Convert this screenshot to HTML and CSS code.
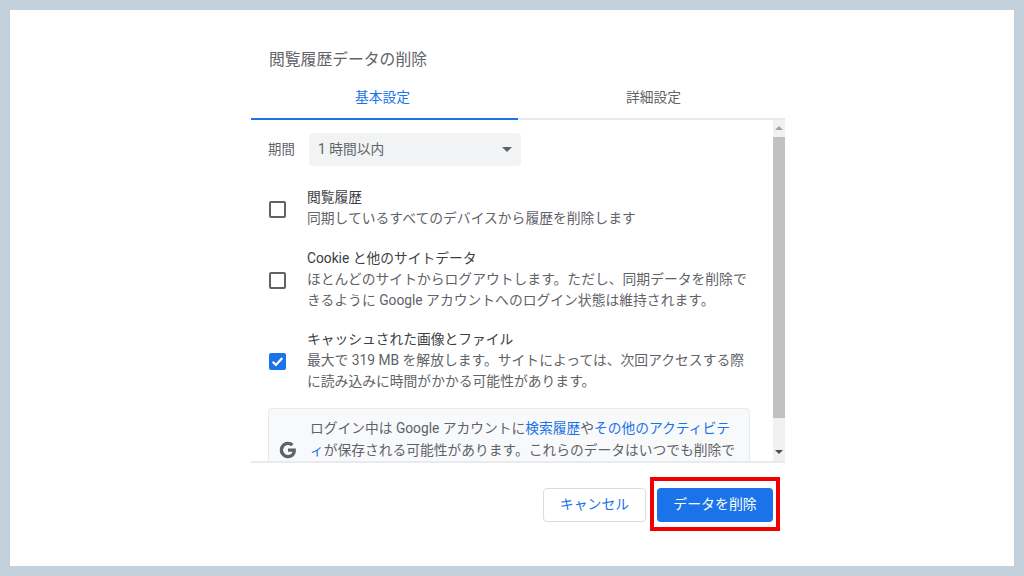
FILE: index.html
```html
<!DOCTYPE html>
<html lang="ja">
<head>
    <meta charset="UTF-8">
    <title>閲覧履歴データの削除</title>
    <link rel="stylesheet" href="styles.css">
</head>
<body>
    <div class="frame">
        <div class="dialog">
            <h1 class="title">閲覧履歴データの削除</h1>
            <div class="tabs">
                <div class="tab active">基本設定</div>
                <div class="tab">詳細設定</div>
            </div>
            <div class="scroll-area">
                <div class="content">
                    <div class="period">
                        <span class="period-label">期間</span>
                        <div class="select">
                            <span>1 時間以内</span>
                            <span class="arrow"></span>
                        </div>
                    </div>
                    <div class="option option-first">
                        <span class="checkbox"></span>
                        <div>
                            <div class="option-title">閲覧履歴</div>
                            <div class="option-desc">同期しているすべてのデバイスから履歴を削除します</div>
                        </div>
                    </div>
                    <div class="option option-second">
                        <span class="checkbox"></span>
                        <div>
                            <div class="option-title">Cookie と他のサイトデータ</div>
                            <div class="option-desc">ほとんどのサイトからログアウトします。ただし、同期データを削除で<br>きるように Google アカウントへのログイン状態は維持されます。</div>
                        </div>
                    </div>
                    <div class="option option-third">
                        <span class="checkbox checked">
                            <svg width="15" height="15" viewBox="0 0 14 14"><path d="M1.8 7.2l3.5 3.5 6.9-7.4" fill="none" stroke="#fff" stroke-width="2.4"/></svg>
                        </span>
                        <div>
                            <div class="option-title">キャッシュされた画像とファイル</div>
                            <div class="option-desc">最大で 319 MB を解放します。サイトによっては、次回アクセスする際<br>に読み込みに時間がかかる可能性があります。</div>
                        </div>
                    </div>
                    <div class="notice">
                        <svg class="g-logo" width="18" height="18" viewBox="0 0 24 24" fill="#5f6368">
                            <path d="M22.56 12.25c0-.78-.07-1.53-.2-2.25H12v4.26h5.92c-.26 1.37-1.04 2.53-2.21 3.31v2.77h3.57c2.08-1.92 3.28-4.74 3.28-8.09z"/>
                            <path d="M12 23c2.97 0 5.46-.98 7.28-2.66l-3.57-2.77c-.98.66-2.23 1.06-3.71 1.06-2.86 0-5.29-1.93-6.16-4.53H2.18v2.84C3.99 20.53 7.7 23 12 23z"/>
                            <path d="M5.84 14.09c-.22-.66-.35-1.36-.35-2.09s.13-1.43.35-2.09V7.07H2.18C1.43 8.55 1 10.22 1 12s.43 3.45 1.18 4.93l2.85-2.22.81-.62z"/>
                            <path d="M12 5.38c1.62 0 3.06.56 4.21 1.64l3.15-3.15C17.45 2.09 14.97 1 12 1 7.7 1 3.99 3.47 2.18 7.07l3.66 2.84c.87-2.6 3.3-4.53 6.16-4.53z"/>
                        </svg>
                        <div class="notice-text">ログイン中は Google アカウントに<a href="#">検索履歴</a>や<a href="#">その他のアクティビテ<br>ィ</a>が保存される可能性があります。これらのデータはいつでも削除で</div>
                    </div>
                </div>
                <div class="scrollbar">
                    <span class="sb-up"></span>
                    <div class="sb-thumb"></div>
                    <span class="sb-down"></span>
                </div>
            </div>
            <div class="buttons">
                <button class="btn btn-cancel">キャンセル</button>
                <div class="highlight">
                    <button class="btn btn-delete">データを削除</button>
                </div>
            </div>
        </div>
    </div>
</body>
</html>
```

FILE: styles.css
```css
* {
    box-sizing: border-box;
}
html, body {
    margin: 0;
    padding: 0;
}
body {
    width: 1024px;
    height: 576px;
    overflow: hidden;
    background: #c5d1da;
    padding: 10px;
    font-family: Roboto, "Noto Sans CJK JP", sans-serif;
    color: #5f6368;
}
.frame {
    width: 1004px;
    height: 556px;
    background: #fff;
    padding-left: 241px;
}
.dialog {
    width: 534px;
}
.title {
    margin: 0;
    padding: 40px 0 0 18px;
    height: 70px;
    font-size: 15.8px;
    line-height: 20px;
    font-weight: 400;
    color: #5f6368;
}
.tabs {
    display: flex;
    height: 40px;
    border-bottom: 2px solid #e8eaed;
}
.tab {
    width: 268px;
    height: 40px;
    padding: 7px 0 0 4px;
    text-align: center;
    font-size: 13.75px;
    line-height: 20px;
    color: #5f6368;
}
.tab.active {
    padding: 7px 4px 0 0;
    color: #1a73e8;
    border-bottom: 2px solid #1a73e8;
}
.scroll-area {
    display: flex;
    height: 343px;
    overflow: hidden;
    border-bottom: 2px solid #e8eaed;
}
.content {
    width: 522px;
    padding: 13px 23px 0 17px;
}
.period {
    display: flex;
    align-items: center;
}
.period-label {
    width: 41px;
    padding-bottom: 4px;
    font-size: 13.4px;
}
.select {
    display: flex;
    justify-content: space-between;
    align-items: center;
    width: 212px;
    height: 33px;
    padding: 0 9px 4px;
    background: #f1f3f4;
    border-radius: 4px;
    font-size: 13.75px;
}
.arrow {
    width: 0;
    height: 0;
    margin-top: 4px;
    border-left: 5px solid transparent;
    border-right: 5px solid transparent;
    border-top: 5px solid #5f6368;
}
.option {
    display: flex;
    align-items: center;
}
.option-first {
    margin-top: 21px;
}
.option-second {
    margin-top: 18px;
}
.option-third {
    margin-top: 17px;
}
.checkbox {
    display: flex;
    align-items: center;
    justify-content: center;
    flex: none;
    width: 17px;
    height: 17px;
    margin: 2px 21px 0 1px;
    border: 2px solid #5f6368;
    border-radius: 2px;
}
.checkbox.checked {
    background: #1a73e8;
    border-color: #1a73e8;
}
.option-title {
    font-size: 13.75px;
    line-height: 21px;
    color: #3c4043;
}
.option-second .option-title, .option-third .option-title {
    line-height: 22px;
}
.option-desc {
    font-size: 13.8px;
    line-height: 21px;
    white-space: nowrap;
    color: #5f6368;
}
.notice {
    display: flex;
    align-items: flex-start;
    width: 482px;
    margin-top: 16px;
    padding: 8px 0 30px 10px;
    background: #f8f9fa;
    border: 1px solid #e8eaed;
    border-radius: 4px;
}
.g-logo {
    flex: none;
    margin: 24px 13px 0 0;
}
.notice-text {
    font-size: 13.75px;
    line-height: 22px;
    white-space: nowrap;
}
.notice-text a {
    color: #1a73e8;
    text-decoration: none;
}
.scrollbar {
    display: flex;
    flex-direction: column;
    width: 12px;
    background: #f1f1f1;
}
.sb-up, .sb-down {
    flex: none;
    height: 17px;
    position: relative;
}
.sb-up::after, .sb-down::after {
    content: "";
    position: absolute;
    left: 2px;
    top: 6px;
    border-left: 4px solid transparent;
    border-right: 4px solid transparent;
}
.sb-up::after {
    border-bottom: 4px solid #a3a3a3;
}
.sb-down::after {
    border-top: 4px solid #505050;
}
.sb-thumb {
    height: 281px;
    background: #c1c1c1;
}
.sb-down {
    margin-top: auto;
}
.buttons {
    display: flex;
    justify-content: flex-end;
    align-items: flex-start;
    padding: 14px 5px 0 0;
}
.btn {
    height: 34px;
    padding: 0 0 4px;
    border-radius: 4px;
    font-family: inherit;
    font-size: 13.9px;
}
.btn-cancel {
    width: 103px;
    margin: 11px 4px 0 0;
    background: #fff;
    border: 1px solid #dadce0;
    color: #1a73e8;
}
.highlight {
    padding: 7px 3px 5px;
    border: 4px solid #f00000;
}
.btn-delete {
    display: block;
    width: 116px;
    background: #1a73e8;
    border: none;
    color: #fff;
}
```
